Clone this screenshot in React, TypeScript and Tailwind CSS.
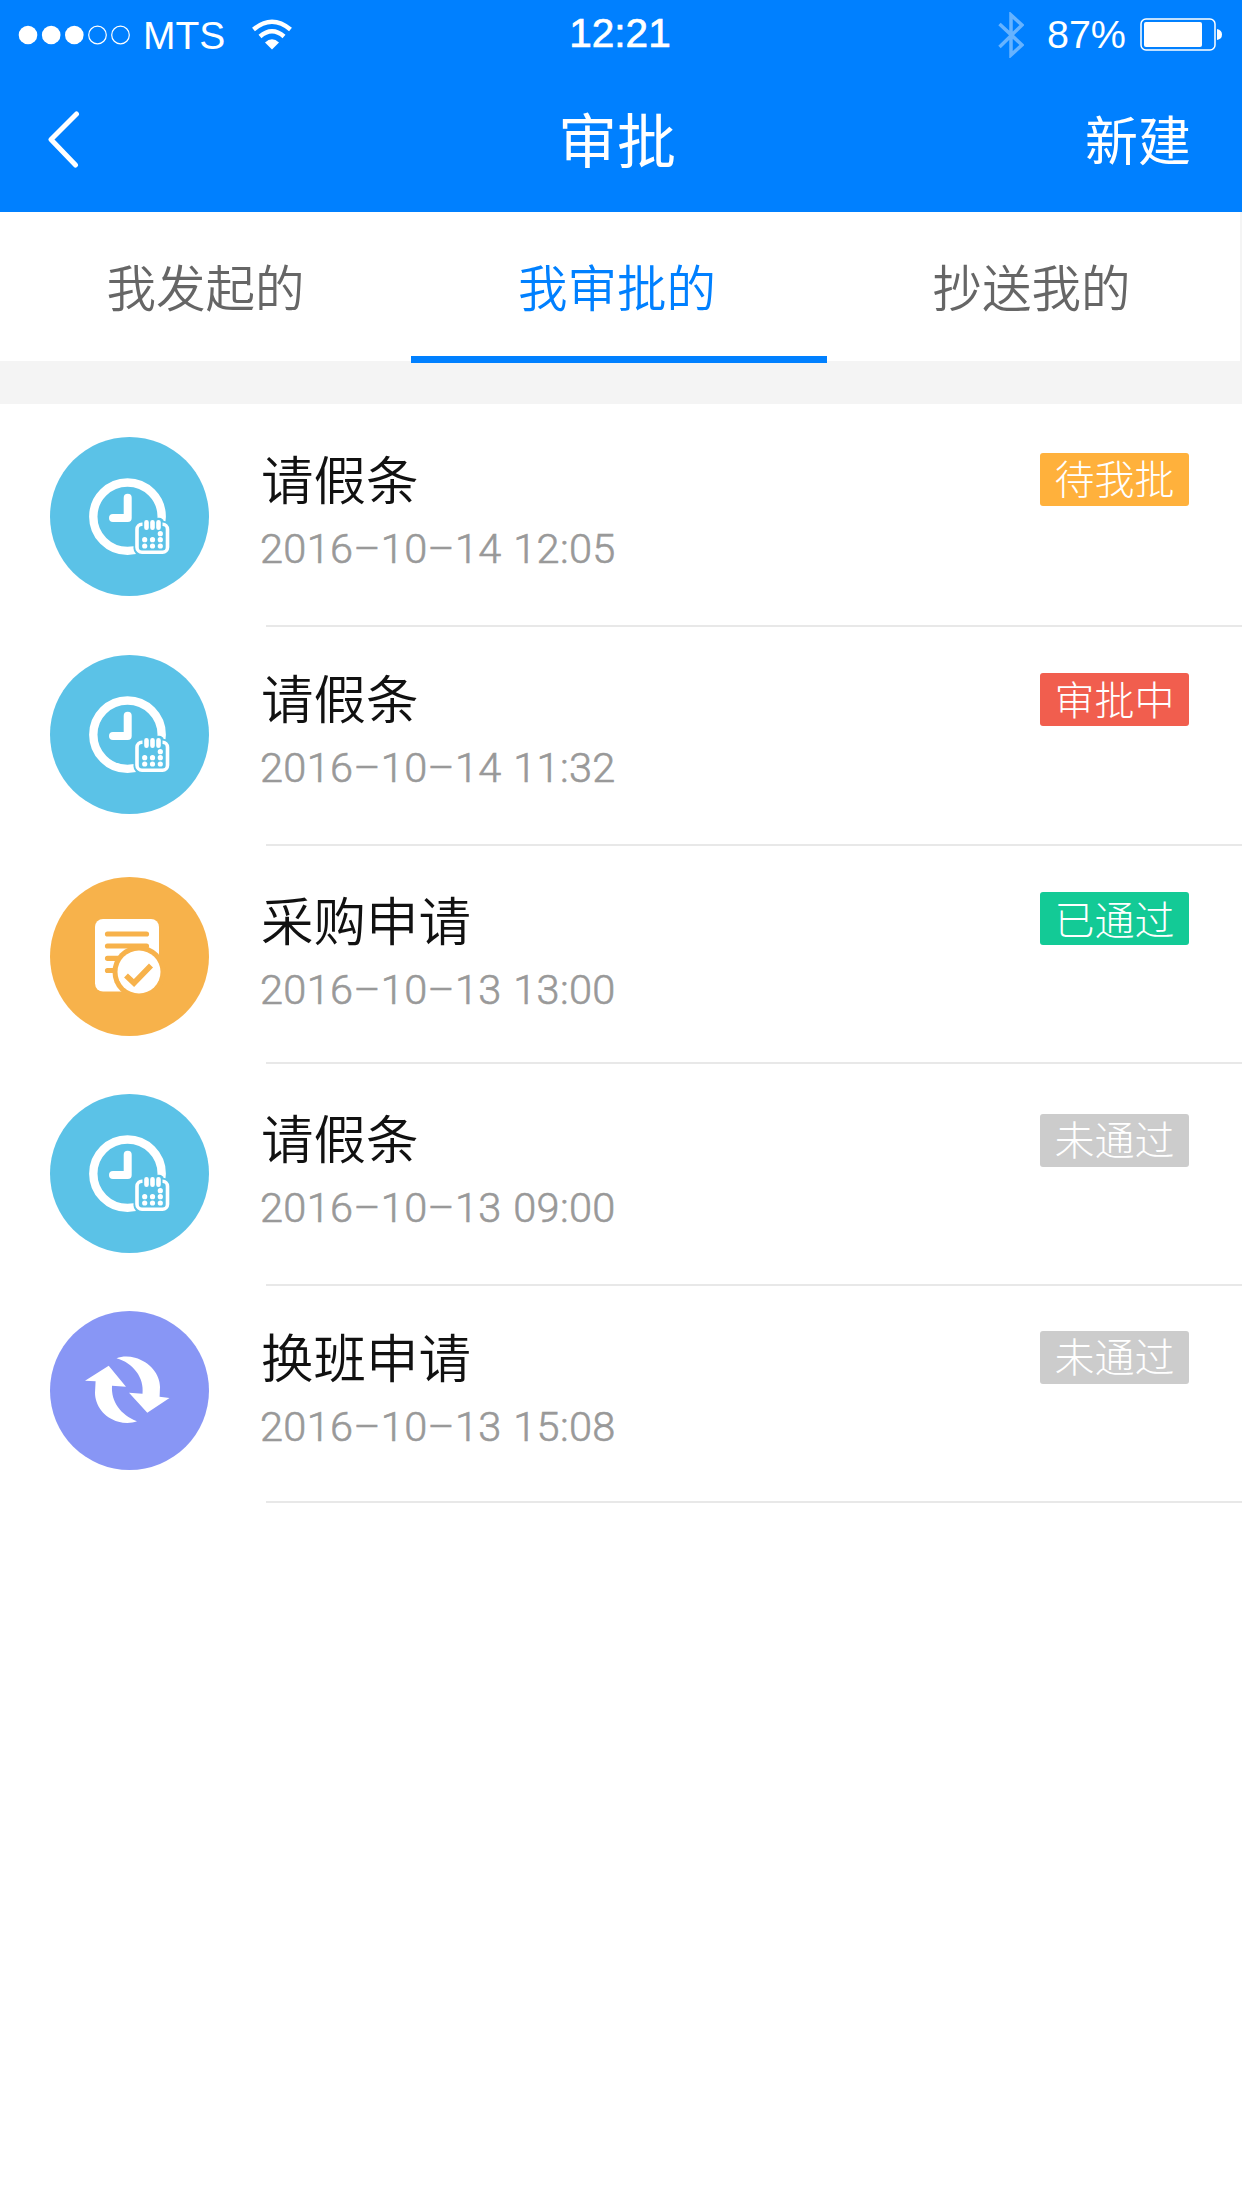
import React from "react";

type Kind = "leave" | "purchase" | "shift";

const circleColor: Record<Kind, string> = {
  leave: "fill-[#5bc2e7]",
  purchase: "fill-[#f7b24b]",
  shift: "fill-[#8896f5]",
};

function LeaveGlyph() {
  return (
    <g transform="translate(0 0.7)">
      <circle cx="77.5" cy="79" r="34.2" fill="none" stroke="#fff" strokeWidth="8.4" />
      <path d="M77.7 60V80.3H63" fill="none" stroke="#fff" strokeWidth="8" strokeLinecap="round" strokeLinejoin="round" />
      <rect x="83.5" y="83" width="37" height="35.5" rx="8" className="fill-[#5bc2e7]" />
      <rect x="92" y="80" width="22" height="14" rx="5" className="fill-[#5bc2e7]" />
      <rect x="87" y="86.5" width="30.5" height="28" rx="5" fill="none" stroke="#fff" strokeWidth="3.6" />
      <rect x="92.5" y="82" width="20" height="8" className="fill-[#5bc2e7]" />
      <path d="M96.5 84.5v5.5M102.5 84.5v5.5M108.5 84.5v5.5" stroke="#fff" strokeWidth="4.6" strokeLinecap="round" />
      <g fill="#fff">
        <circle cx="110.3" cy="96" r="2.6" />
        <circle cx="94.7" cy="102" r="2.6" />
        <circle cx="102.5" cy="102" r="2.6" />
        <circle cx="110.3" cy="102" r="2.6" />
        <circle cx="94.7" cy="108.3" r="2.6" />
        <circle cx="102.5" cy="108.3" r="2.6" />
        <circle cx="110.3" cy="108.3" r="2.6" />
      </g>
    </g>
  );
}

function PurchaseGlyph() {
  return (
    <g>
      <rect x="45" y="42" width="64" height="72.5" rx="8" fill="#fff" />
      <path d="M57.5 57h39M57.5 69h39M57.5 81.3h20M57.5 93.5h12" stroke="#f7b24b" strokeWidth="5.2" strokeLinecap="round" />
      <circle cx="89" cy="95" r="26.5" className="fill-[#f7b24b]" />
      <circle cx="89" cy="95" r="21.5" fill="#fff" />
      <path d="M76 98.500l8 7.500L101 88.500" fill="none" stroke="#f7b24b" strokeWidth="5.6" />
    </g>
  );
}

function ShiftGlyph() {
  return (
    <g fill="#fff" transform="translate(0 -4.3)">
      <path d="M66.5 51.5C72 49.3 79 49.3 85 51C100 55 110 68 110 80L109.6 90L119.5 91.2L97.3 106L79 86L92.5 87C94.5 71 83 56 66.5 51.5Z" />
      <path d="M87 114.5C81.5 116.7 74.5 116.7 68.5 115C53.5 111 45 98 45 86L45.6 74.5L35 74L58.7 59L76 80L62 79C61 95 70.5 108 87 114.5Z" />
    </g>
  );
}

const glyphs: Record<Kind, () => React.JSX.Element> = {
  leave: LeaveGlyph,
  purchase: PurchaseGlyph,
  shift: ShiftGlyph,
};

interface Item {
  kind: Kind;
  title: string;
  date: string;
  status: string;
  row: string;
  icon: string;
  text: string;
  tag: string;
}

const items: Item[] = [
  { kind: "leave", title: "请假条", date: "2016–10–14 12:05", status: "待我批", row: "h-[223px]", icon: "mt-[33px]", text: "mt-[38px]", tag: "mt-[49px] pb-[6px] bg-[#ffb13c]" },
  { kind: "leave", title: "请假条", date: "2016–10–14 11:32", status: "审批中", row: "h-[219px]", icon: "mt-[28px]", text: "mt-[34px]", tag: "mt-[46px] pb-[4px] bg-[#f15e4e]" },
  { kind: "purchase", title: "采购申请", date: "2016–10–13 13:00", status: "已通过", row: "h-[218px]", icon: "mt-[31px]", text: "mt-[37px]", tag: "mt-[46px] pb-[2px] bg-[#13ca96]" },
  { kind: "leave", title: "请假条", date: "2016–10–13 09:00", status: "未通过", row: "h-[222px]", icon: "mt-[30px]", text: "mt-[37px]", tag: "mt-[50px] pb-[5px] bg-[#cccccc]" },
  { kind: "shift", title: "换班申请", date: "2016–10–13 15:08", status: "未通过", row: "h-[217px]", icon: "mt-[25px]", text: "mt-[34px]", tag: "mt-[45px] pb-[5px] bg-[#cccccc]" },
];

function Row({ item }: { item: Item }) {
  const Glyph = glyphs[item.kind];
  return (
    <li className={`flex items-start pl-[50px] ${item.row}`}>
      <svg viewBox="0 0 159 159" className={`size-[159px] shrink-0 ${item.icon}`}>
        <circle cx="79.5" cy="79.5" r="79.5" className={circleColor[item.kind]} />
        <Glyph />
      </svg>
      <div className="ml-[57px] flex h-full flex-1 items-start justify-between border-b-2 border-[#e8e8e8] pr-[53px]">
        <div className={`-ml-[5px] ${item.text}`}>
          <h2 className="mb-[4px] text-[52.5px] leading-[70px] font-[350] text-[#111]">{item.title}</h2>
          <p className="-ml-px font-['Roboto'] text-[41.5px] leading-[66px] font-light tracking-[0.35px] whitespace-nowrap text-[#999] [word-spacing:1px] [-webkit-text-stroke:0.6px_#999]">{item.date}</p>
        </div>
        <span className={`flex h-[53px] w-[149px] items-center justify-center rounded-[3px] text-[40px] leading-none font-light text-white ${item.tag}`}>
          {item.status}
        </span>
      </div>
    </li>
  );
}

function StatusBar() {
  return (
    <div className="grid h-[70px] grid-cols-3 items-center font-['Liberation_Sans']">
      <div className="flex items-center">
        <svg viewBox="0 0 114 20" className="ml-[18px] h-[20px] w-[114px]">
          <g fill="#fff">
            <circle cx="10" cy="10" r="9.3" />
            <circle cx="33.2" cy="10" r="9.3" />
            <circle cx="56.3" cy="10" r="9.3" />
          </g>
          <g fill="none" stroke="#fff" strokeWidth="1.2">
            <circle cx="79.5" cy="10" r="8.8" />
            <circle cx="102.5" cy="10" r="8.8" />
          </g>
        </svg>
        <span className="ml-[11px] text-[39px] leading-none">MTS</span>
        <svg viewBox="0 0 40 31" className="-mt-[2px] ml-[27px] h-[31px] w-[40px]">
          <g fill="none" stroke="#fff" strokeWidth="4.5">
            <path d="M1.5 10.5Q20 -5 38.5 10.5" />
            <path d="M8 17.5Q20 7 32 17.5" />
          </g>
          <path d="M13 23.5Q20 17 27 23.5L20 30.5Z" fill="#fff" />
        </svg>
      </div>
      <span className="-mt-[3px] pr-[2px] text-center text-[40.5px] leading-none [-webkit-text-stroke:0.7px_white]">12:21</span>
      <div className="flex items-center justify-end pr-[20px]">
        <svg viewBox="0 0 26 46" className="h-[46px] w-[26px] opacity-40">
          <path d="M1.5 12L24 33L13 43V3L24 13L1.5 35" fill="none" stroke="#fff" strokeWidth="3.5" />
        </svg>
        <span className="ml-[23px] text-[39.5px] leading-none">87%</span>
        <svg viewBox="0 0 82 33" className="-mt-px ml-[14px] h-[33px] w-[82px]">
          <rect x="1" y="1" width="74" height="31" rx="5" fill="none" stroke="#fff" strokeWidth="1.5" />
          <rect x="4" y="4" width="58" height="25" rx="2" fill="#fff" />
          <path d="M77 11Q82 12 82 16.5T77 22Z" fill="#fff" />
        </svg>
      </div>
    </div>
  );
}

export default function App() {
  return (
    <div className="min-h-[2208px] w-[1242px] bg-white font-['Noto_Sans_CJK_SC',sans-serif]">
      <header className="h-[212px] bg-[#0080ff] text-white">
        <StatusBar />
        <div className="grid h-[142px] grid-cols-3 items-center">
          <button className="ml-[48px] w-fit">
            <svg viewBox="0 0 32 57" className="-mt-[4px] block h-[57px] w-[32px]">
              <path d="M28.5 3L3 28.5L27.5 54" fill="none" stroke="#fff" strokeWidth="5" strokeLinecap="round" strokeLinejoin="round" />
            </svg>
          </button>
          <h1 className="pr-[8px] pb-[8px] text-center text-[59px] leading-none">审批</h1>
          <button className="mr-[51px] justify-self-end pb-[6px] text-[53px] leading-none">新建</button>
        </div>
      </header>
      <nav className="flex h-[149px] border-r-2 border-[#f4f4f4] text-[49.5px] font-[350]">
        <button className="w-[411px] text-[#666]">我发起的</button>
        <button className="relative w-[416px] pr-[4px] text-[#0080ff]">
          我审批的
          <span className="absolute -bottom-[2px] left-0 z-10 h-[7px] w-full bg-[#0080ff]" />
        </button>
        <button className="flex-1 pr-[4px] text-[#666]">抄送我的</button>
      </nav>
      <div className="h-[43px] bg-[#f4f4f4]" />
      <ul>
        {items.map((item) => (
          <Row key={item.date} item={item} />
        ))}
      </ul>
    </div>
  );
}
